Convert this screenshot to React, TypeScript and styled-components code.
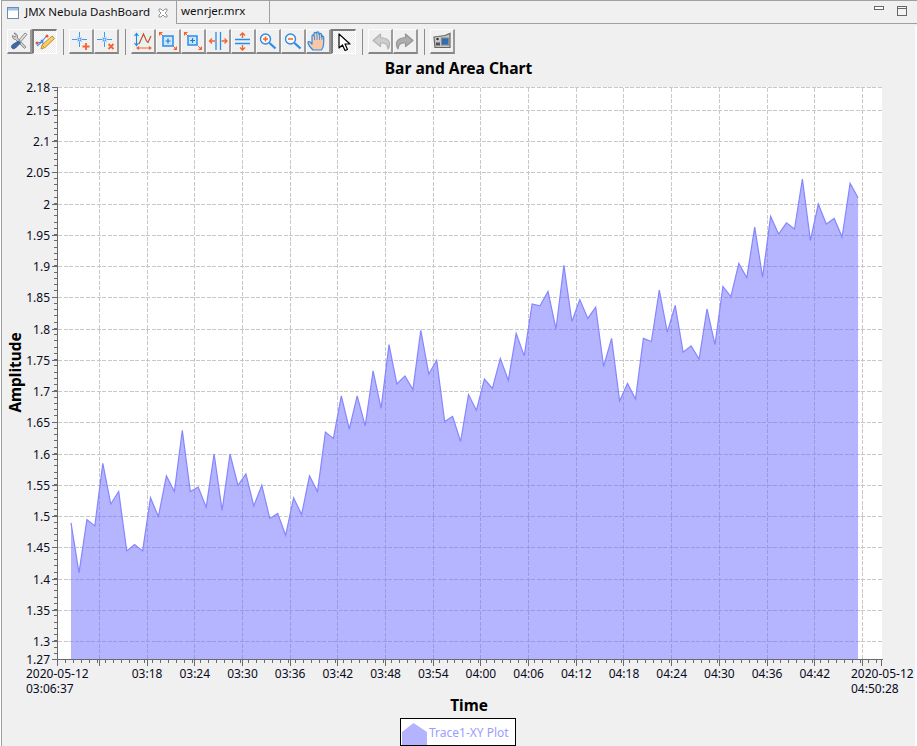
import React from "react";
import styled, { createGlobalStyle } from "styled-components";

const Global = createGlobalStyle`
  html, body { margin: 0; padding: 0; background: #fff; }
  body { font-family: "Noto Sans", "Liberation Sans", sans-serif; }
  #root { width: 917px; height: 746px; overflow: hidden; }
`;

const Shell = styled.div`
  width: 917px; height: 746px; box-sizing: border-box; padding-left: 1px;
  display: flex; background: #fff;
`;
const Workspace = styled.div`
  flex: 1; min-width: 0; display: flex; flex-direction: column;
  border-left: 1px solid #a0a0a0; background: #f0f0f0;
`;
const TabBar = styled.div`
  height: 24px; box-sizing: border-box; flex: none; display: flex; align-items: stretch;
  border-top: 1px solid #a0a0a0;
`;
const Tab = styled.div<{ $active?: boolean }>`
  display: flex; align-items: center; box-sizing: border-box;
  border-right: 1px solid #a0a0a0;
  border-bottom: ${(p) => (p.$active ? "none" : "1px solid #a0a0a0")};
  width: ${(p) => (p.$active ? "175px" : "93px")};
  padding-left: ${(p) => (p.$active ? "5px" : "4px")};
  font-size: 11.5px; color: #111; white-space: nowrap;
`;
const TabIcon = styled.svg` margin-right: 6px; flex: none; `;
const TabLabel = styled.span` flex: none; line-height: 16px; position: relative; top: -1px; `;
const TabClose = styled.svg` margin-left: 8px; flex: none; `;
const TabFiller = styled.div`
  flex: 1; display: flex; justify-content: flex-end; align-items: flex-start;
  border-bottom: 1px solid #a0a0a0; padding: 4px 10px 0 0; gap: 12px;
`;
const Pane = styled.div`
  flex: 1; min-height: 0; margin-top: 2px; border-right: 2px solid #fff;
  display: flex; flex-direction: column; align-items: stretch;
`;
const Toolbar = styled.div`
  flex: none; display: flex; align-items: flex-start; height: 28px; padding: 3px 0 0 5px;
`;
const ToolButton = styled.div<{ $on?: boolean }>`
  width: 25px; height: 25px; box-sizing: border-box; flex: none;
  display: flex; align-items: center; justify-content: center;
  border-style: solid; border-width: 1px 2px 2px 1px;
  ${(p) =>
    p.$on
      ? `border-color: #7c7c7c #fff #fff #7c7c7c; border-width: 2px 1px 1px 2px;
         background: repeating-conic-gradient(#fff 0 25%, #eaeaea 0 50%) 0 0 / 2px 2px;`
      : `border-color: #fbfbfb #9a9a9a #868686 #fbfbfb; background: #f0f0f0;`}
`;
const Separator = styled.div`
  width: 1px; height: 26px; background: #8c8c8c; margin: 0 5px 0 6px; flex: none;
`;
const ChartTitle = styled.div`
  flex: none; height: 23px; line-height: 23px; text-align: center;
  font-size: 15.6px; font-weight: 700; color: #000;
`;
const ChartBody = styled.div`
  flex: none; height: 622px; display: flex; align-items: stretch;
`;
const YTitle = styled.div`
  flex: none; width: 22px; margin-left: 1px; display: flex; align-items: center; justify-content: center;
  font-size: 15.4px; font-weight: 700; color: #000;
`;
const YTitleText = styled.span`
  display: block; transform: rotate(-90deg); white-space: nowrap; position: relative; top: -19px; left: 1px;
`;
const XTitle = styled.div`
  flex: none; height: 20px; line-height: 20px; text-align: center; margin-top: -6px; padding-left: 21px;
  font-size: 15.4px; font-weight: 700; color: #000;
`;
const LegendRow = styled.div`
  flex: none; display: flex; justify-content: center; padding-right: 1px; margin-top: 2px;
`;
const Legend = styled.div`
  width: 116px; height: 28px; box-sizing: border-box; border: 1px solid #000; background: #fff;
  display: flex; align-items: flex-end; padding-left: 1px; font-size: 12px; color: #9c9cff;
`;
const LegendText = styled.span` margin: 0 0 4px 2px; line-height: 16px; white-space: nowrap; `;
const Tick = styled.text`
  font-family: "Noto Sans", "Liberation Sans", sans-serif; font-size: 12px; fill: #0a0a1e;
`;

const SVG_X = 25; // chart svg's left edge on the page
const SVG_Y = 80; // chart svg's top edge on the page
const py = (v: number) => 641.5 - (v - 1.3) * 625;

const values = [1.49,1.41,1.495,1.485,1.585,1.52,1.54,1.445,1.455,1.445,1.53,1.5,1.565,1.54,1.638,1.54,1.547,1.515,1.6,1.51,1.6,1.55,1.568,1.517,1.55,1.497,1.505,1.47,1.53,1.503,1.565,1.54,1.635,1.625,1.693,1.64,1.693,1.645,1.733,1.673,1.775,1.712,1.725,1.703,1.798,1.728,1.75,1.652,1.66,1.62,1.695,1.67,1.72,1.705,1.753,1.718,1.793,1.757,1.84,1.837,1.86,1.8,1.902,1.812,1.847,1.817,1.835,1.74,1.785,1.685,1.713,1.688,1.785,1.78,1.862,1.795,1.838,1.763,1.773,1.752,1.832,1.775,1.868,1.852,1.905,1.882,1.963,1.883,1.98,1.952,1.97,1.96,2.04,1.942,2.0,1.968,1.977,1.947,2.033,2.01];
const points = values.map((v, i) => `${(71 + 7.95 * i).toFixed(1)},${py(v).toFixed(1)}`);
const yLabels = ["2.15","2.1","2.05","2","1.95","1.9","1.85","1.8","1.75","1.7","1.65","1.6","1.55","1.5","1.45","1.4","1.35","1.3"];
const xLabels = ["03:18","03:24","03:30","03:36","03:42","03:48","03:54","04:00","04:06","04:12","04:18","04:24","04:30","04:36","04:42"];
const gx = (i: number) => 99.4 + 47.69 * i;

function Chart() {
  const yMinor: number[] = [];
  for (let y = 659.5 - 6.25; y > 87; y -= 6.25) yMinor.push(y);
  const xMinor: number[] = [];
  for (let x = 57.5; x < 882; x += 7.95) xMinor.push(x);
  return (
    <svg width={890} height={622} viewBox={`${SVG_X} ${SVG_Y} 890 622`} style={{ display: "block", flex: "none" }}>
      <rect x={58} y={87.5} width={824} height={572} fill="#fff" />
      <g stroke="#c8c8c8" strokeDasharray="4 1.5" fill="none" shapeRendering="crispEdges">
        <line x1={58} x2={882} y1={87.5} y2={87.5} />
        {yLabels.map((l) => <line key={l} x1={58} x2={882} y1={Math.floor(py(+l)) + 0.5} y2={Math.floor(py(+l)) + 0.5} />)}
        {Array.from({ length: 17 }, (_, i) => <line key={i} x1={Math.floor(gx(i)) + 0.5} x2={Math.floor(gx(i)) + 0.5} y1={88} y2={659} />)}
      </g>
      <polygon points={`71,659 ${points.join(" ")} 858,659`} fill="#6666ff" fillOpacity={0.49} />
      <polyline points={points.join(" ")} fill="none" stroke="#8686ff" strokeWidth={1.2} />
      <g stroke="#6a6a6a" fill="none" shapeRendering="crispEdges">
        <line x1={57.5} x2={57.5} y1={87} y2={660} />
        <line x1={57} x2={883} y1={659.5} y2={659.5} />
        {yMinor.map((y) => <line key={y} x1={54} x2={57} y1={Math.floor(y) + 0.5} y2={Math.floor(y) + 0.5} />)}
        <line x1={52} x2={57} y1={87.5} y2={87.5} />
        <line x1={52} x2={57} y1={659.5} y2={659.5} />
        {yLabels.map((l) => <line key={l} x1={52} x2={57} y1={Math.floor(py(+l)) + 0.5} y2={Math.floor(py(+l)) + 0.5} />)}
        {xMinor.map((x) => <line key={x} x1={Math.floor(x) + 0.5} x2={Math.floor(x) + 0.5} y1={660} y2={663} />)}
        <line x1={57.5} x2={57.5} y1={660} y2={666} />
        <line x1={881.5} x2={881.5} y1={660} y2={666} />
        {Array.from({ length: 17 }, (_, i) => <line key={i} x1={Math.floor(gx(i)) + 0.5} x2={Math.floor(gx(i)) + 0.5} y1={660} y2={666} />)}
      </g>
      <Tick x={50} y={92} textAnchor="end">2.18</Tick>
      {yLabels.map((l) => <Tick key={l} x={50} y={py(+l) + 4.5} textAnchor="end">{l}</Tick>)}
      <Tick x={50} y={664} textAnchor="end">1.27</Tick>
      <Tick x={26} y={678}>2020-05-12</Tick>
      <Tick x={26} y={693}>03:06:37</Tick>
      {xLabels.map((l, i) => <Tick key={l} x={gx(i + 1)} y={678} textAnchor="middle">{l}</Tick>)}
      <Tick x={851} y={678}>2020-05-12</Tick>
      <Tick x={851} y={693}>04:50:28</Tick>
    </svg>
  );
}

type IconProps = { children: React.ReactNode };
const Icon = ({ children }: IconProps) => (
  <svg width={22} height={22} viewBox="0 0 22 22" fill="none">{children}</svg>
);

const Crosshair = () => (
  <g strokeWidth={1}>
    <path d="M9.500 2v5M9.500 12v5M2 9.500h5M12 9.500h5" stroke="#3f9cf0" />
    <path d="M7.500 7.500l4 4M11.500 7.500l-4 4" stroke="#4fa6f2" />
    <circle cx={9.500} cy={9.500} r={1.500} fill="#d5eafc" stroke="#2a8ce8" />
  </g>
);
const IconTools = () => (
  <Icon>
    <path d="M6 3L8 5.500 7 7 4.500 5.500C4 8 5.500 9.500 7.500 9.500l9 9 1.500-1.500-8.500-9C10 5.500 8.500 3 6 3z" fill="#cfcfcf" stroke="#777" strokeWidth={0.8} />
    <path d="M17 3l2 1.500-6 7-2-1.500z" fill="#dedede" stroke="#777" strokeWidth={0.8} />
    <path d="M10.500 11l2 2-5 5c-1.300 1-2.700 1-3.500 0s-.5-2.500.8-3.500z" fill="#3d6aa8" stroke="#2a4a78" strokeWidth={0.8} />
  </Icon>
);
const IconPencil = () => (
  <Icon>
    <path d="M2.500 12l5-1 5-6M3 15l5-4 4 4" stroke="#4a90e2" strokeWidth={1.100} />
    <circle cx={3} cy={12} r={1.500} fill="#e5533d" />
    <circle cx={8} cy={10} r={1.500} fill="#4a90e2" />
    <circle cx={13} cy={5} r={1.500} fill="#e5533d" />
    <path d="M18 5l2.500 2.500-9.500 9-4 1.500 1-4z" fill="#f9cf63" stroke="#c08a3a" strokeWidth={1} />
    <path d="M8.500 14.500l2 2" stroke="#e98b2c" />
  </Icon>
);
const IconCursorAdd = () => (
  <Icon>
    <Crosshair />
    <path d="M16 13v7M12.500 16.500h7" stroke="#f4622e" strokeWidth={1.800} />
  </Icon>
);
const IconCursorDel = () => (
  <Icon>
    <Crosshair />
    <path d="M13.500 14l5 5M18.500 14l-5 5" stroke="#f4622e" strokeWidth={1.800} />
  </Icon>
);
const IconAutoscale = () => (
  <Icon>
    <rect x={5} y={3} width={14} height={13} fill="#e2f7ea" />
    <path d="M7 14L11.500 4l3 7 1.500 1.500L19 6" stroke="#e0413a" strokeWidth={1.200} />
    <path d="M4.500 4v11M2.500 6l2-2.500 2 2.500M2.500 13l2 2.500 2-2.500" stroke="#1e88e5" strokeWidth={1.100} />
    <path d="M5 18h14M7 16.500L5 18l2 1.500M17 16.500l2 1.500-2 1.500" stroke="#f4622e" strokeWidth={1.100} />
  </Icon>
);
const Fit = ({ small }: { small?: boolean }) => (
  <Icon>
    <rect x={6} y={6} width={small ? 9 : 10} height={small ? 9 : 10} fill="#cfe6fb" stroke="#2a8ce8" strokeWidth={1.500} />
    <path d={small ? "M10.500 8v5M8 10.500h5" : "M11 8.500v5M8.500 11h5"} stroke="#1e7fd8" strokeWidth={1.200} />
    <path d="M2 2h4L2 6zM20 20h-4l4-4z" fill="#f4622e" />
    <path d="M4 4l2 2M16 16l2 2" stroke="#f4622e" />
  </Icon>
);
const IconHoriz = () => (
  <Icon>
    <path d="M9 2v18M13.500 2v18" stroke="#2a8ce8" strokeWidth={1.300} />
    <path d="M2.500 11H8M14.500 11H20M5 8.500L2.500 11 5 13.500M17.500 8.500L20 11l-2.500 2.500" stroke="#f4622e" strokeWidth={1.300} />
  </Icon>
);
const IconVert = () => (
  <Icon>
    <path d="M3 9.500h15M3 13.500h15" stroke="#2a8ce8" strokeWidth={1.300} />
    <path d="M10.500 3v5M10.500 15v5M8 5.500L10.500 3 13 5.500M8 17.500l2.500 2.500 2.500-2.500" stroke="#f4622e" strokeWidth={1.300} />
  </Icon>
);
const Magnifier = ({ plus }: { plus?: boolean }) => (
  <Icon>
    <circle cx={8.500} cy={9} r={5} fill="#fff8f2" stroke="#2a8ce8" strokeWidth={1.400} />
    <path d="M12.500 13l6 5.500" stroke="#2a8ce8" strokeWidth={2.200} />
    <path d={plus ? "M6 9h5M8.500 6.500v5" : "M6 9h5"} stroke="#f4622e" strokeWidth={1.500} />
  </Icon>
);
const IconHand = () => (
  <Icon>
    <path d="M6 20c-2-2-4.500-5-5-7-.3-1.400 1-2 2-1l2 2V6c0-1.500 2-1.500 2 0V3.500c0-1.500 2.500-1.500 2.500 0V3c0-1.500 2.500-1.500 2.500 0v1.500c0-1.500 2.500-1.500 2.500 0V7c0-1.300 2.200-1.300 2.200 0v6c0 3-1 5.500-2.200 7z" fill="#f8c8a6" stroke="#2a8ce8" strokeWidth={1.200} strokeLinejoin="round" />
    <path d="M7.500 6v4M10 3.500V10M12.500 3V10M15 4.500V10" stroke="#2a8ce8" strokeWidth={0.8} />
  </Icon>
);
const IconPointer = () => (
  <Icon>
    <path d="M6 3v14l3.500-3 2.500 5.500 2.500-1-2.500-5.500H17z" fill="#fff" stroke="#000" strokeWidth={1.200} strokeLinejoin="round" />
  </Icon>
);
const IconUndo = () => (
  <Icon>
    <path d="M11.500 4L4 10.500l7.500 6V13c4-.8 7 .5 7.500 6 3-5 2-11-7.500-11.500z" fill="#cdcdcd" stroke="#b4b4b4" strokeWidth={1.200} strokeLinejoin="round" />
  </Icon>
);
const IconRedo = () => (
  <Icon>
    <path d="M11.500 4L19 10.500l-7.500 6V13c-4-.8-7 .5-7.500 6-3-5-2-11 7.500-11.500z" fill="#adadad" stroke="#969696" strokeWidth={1.200} strokeLinejoin="round" />
  </Icon>
);
const IconCamera = () => (
  <Icon>
    <path d="M3 7l11-1.500 5-2V17.500H4z" fill="#c6c6c6" stroke="#666" strokeWidth={1.200} />
    <rect x={10.500} y={8} width={7} height={7} fill="#2d6fb5" stroke="#888" />
    <circle cx={6.500} cy={9} r={1.800} fill="#333" stroke="#eee" strokeWidth={0.8} />
    <rect x={5} y={12.500} width={4} height={3} fill="#555" />
  </Icon>
);

export default function App() {
  return (
    <Shell>
      <Global />
      <Workspace>
        <TabBar>
          <Tab $active>
            <TabIcon width={12} height={12} viewBox="0 0 12 12">
              <rect x={0.5} y={0.5} width={11} height={11} fill="#fff" stroke="#6e8bb0" />
              <rect x={1} y={1} width={10} height={2.500} fill="#9cc4ea" />
            </TabIcon>
            <TabLabel>JMX Nebula DashBoard</TabLabel>
            <TabClose width={10} height={10} viewBox="0 0 10 10">
              <path d="M1 1l2 0 2 2 2-2 2 0 0 2-2 2 2 2 0 2-2 0-2-2-2 2-2 0 0-2 2-2-2-2z" fill="#fff" stroke="#888" strokeWidth={0.9} />
            </TabClose>
          </Tab>
          <Tab><TabLabel>wenrjer.mrx</TabLabel></Tab>
          <TabFiller>
            <svg width={11} height={5} viewBox="0 0 11 5" style={{ marginTop: 1 }}><rect x={0.5} y={0.5} width={9} height={3} fill="#fff" stroke="#666" /></svg>
            <svg width={10} height={11} viewBox="0 0 10 11" style={{ marginTop: 1 }}><rect x={0.5} y={0.5} width={9} height={9} fill="#f4f4f4" stroke="#666" /><path d="M0 2.500h10" stroke="#666" /></svg>
          </TabFiller>
        </TabBar>
        <Pane>
          <Toolbar>
            <ToolButton><IconTools /></ToolButton>
            <ToolButton $on><IconPencil /></ToolButton>
            <Separator />
            <ToolButton><IconCursorAdd /></ToolButton>
            <ToolButton><IconCursorDel /></ToolButton>
            <Separator />
            <ToolButton><IconAutoscale /></ToolButton>
            <ToolButton><Fit /></ToolButton>
            <ToolButton><Fit small /></ToolButton>
            <ToolButton><IconHoriz /></ToolButton>
            <ToolButton><IconVert /></ToolButton>
            <ToolButton><Magnifier plus /></ToolButton>
            <ToolButton><Magnifier /></ToolButton>
            <ToolButton><IconHand /></ToolButton>
            <ToolButton $on><IconPointer /></ToolButton>
            <Separator />
            <ToolButton><IconUndo /></ToolButton>
            <ToolButton><IconRedo /></ToolButton>
            <Separator />
            <ToolButton><IconCamera /></ToolButton>
          </Toolbar>
          <ChartTitle>Bar and Area Chart</ChartTitle>
          <ChartBody>
            <YTitle><YTitleText>Amplitude</YTitleText></YTitle>
            <Chart />
          </ChartBody>
          <XTitle>Time</XTitle>
          <LegendRow>
            <Legend>
              <svg width={25} height={22} viewBox="0 0 25 22" style={{ display: "block" }}><path d="M0 9L11.500 0 25 9v13H0z" fill="#b3b3ff" /></svg>
              <LegendText>Trace1-XY Plot</LegendText>
            </Legend>
          </LegendRow>
        </Pane>
      </Workspace>
    </Shell>
  );
}
